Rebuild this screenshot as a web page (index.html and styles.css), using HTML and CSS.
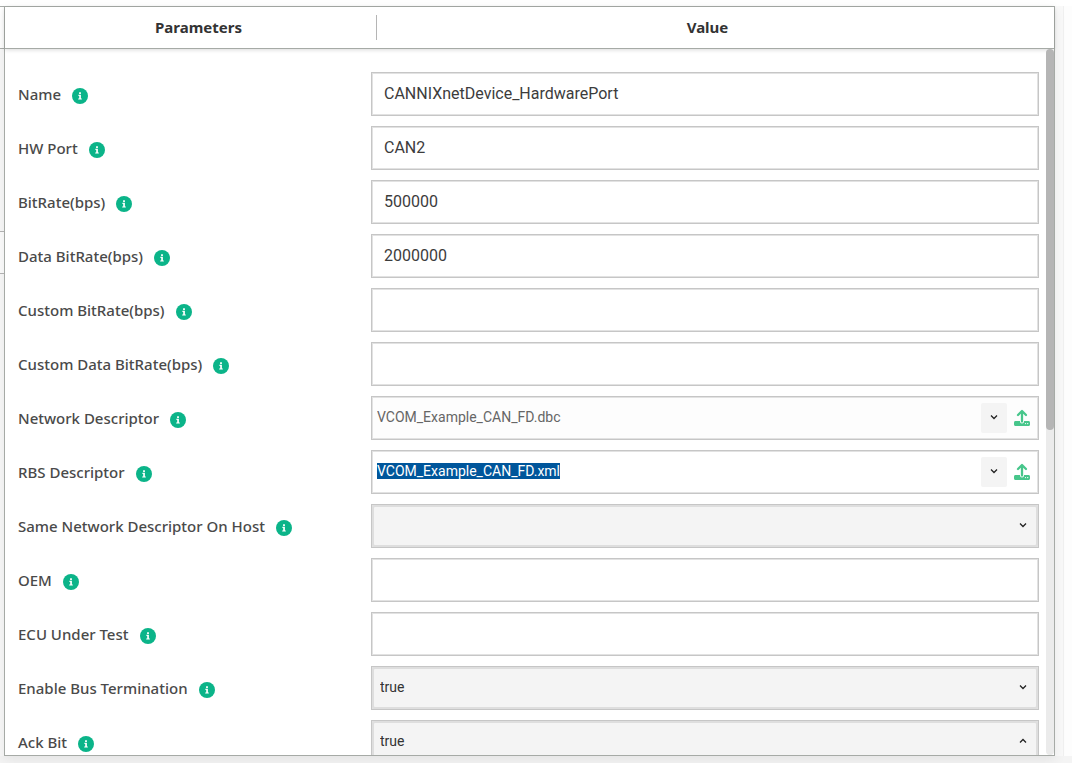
FILE: index.html
```html
<!DOCTYPE html>
<html lang="en">
<head>
<meta charset="utf-8">
<title>Device parameters</title>
<link rel="stylesheet" href="styles.css">
</head>
<body>
<svg class="defs" aria-hidden="true">
  <symbol id="info" viewBox="0 0 16 16"><circle cx="8" cy="8" r="8" fill="#0bb489"/><path fill="#fff" d="M7.100 4.300h1.800v1.600h-1.800zM6.400 6.800h2.500v3.700h.9v1.100H6.200v-1.100h1V7.900h-.8z"/></symbol>
  <symbol id="down" viewBox="0 0 8 8"><path d="M1 2.500l3 3 3-3" fill="none" stroke="#222" stroke-width="1.300"/></symbol>
  <symbol id="up" viewBox="0 0 8 8"><path d="M1 5.500l3-3 3 3" fill="none" stroke="#222" stroke-width="1.300"/></symbol>
  <symbol id="upload" viewBox="0 0 16 18"><path fill="#47c68b" d="M1.500 12h13c.9 0 1.500.6 1.500 1.500v2c0 .9-.6 1.500-1.500 1.500h-13C.6 17 0 16.400 0 15.500v-2C0 12.600.6 12 1.500 12z"/><path d="M8 12.500V3" fill="none" stroke="#fff" stroke-width="4" stroke-linecap="round"/><path d="M8 12.500V2.500M4 6L8 2l4 4" fill="none" stroke="#47c68b" stroke-width="2.300" stroke-linecap="round" stroke-linejoin="round"/><circle cx="11.500" cy="14.600" r=".6" fill="#fff"/><circle cx="13.700" cy="14.600" r=".7" fill="#fff"/></symbol>
</svg>
<div class="page">
  <div class="gutter"><div class="gutter-head"></div><div class="gutter-space"></div><div class="gutter-row"></div></div>
  <main class="panel">
    <header class="head">
      <div class="head-cell head-name">Parameters</div>
      <div class="head-cell head-value">Value</div>
    </header>
    <div class="body">
      <form class="rows">
        <div class="row"><label for="f1">Name <svg class="info"><use href="#info"/></svg></label><input class="field" id="f1" value="CANNIXnetDevice_HardwarePort"></div>
        <div class="row"><label for="f2">HW Port <svg class="info"><use href="#info"/></svg></label><input class="field" id="f2" value="CAN2"></div>
        <div class="row"><label for="f3">BitRate(bps) <svg class="info"><use href="#info"/></svg></label><input class="field" id="f3" value="500000"></div>
        <div class="row"><label for="f4">Data BitRate(bps) <svg class="info"><use href="#info"/></svg></label><input class="field" id="f4" value="2000000"></div>
        <div class="row"><label for="f5">Custom BitRate(bps) <svg class="info"><use href="#info"/></svg></label><input class="field" id="f5"></div>
        <div class="row"><label for="f6">Custom Data BitRate(bps) <svg class="info"><use href="#info"/></svg></label><input class="field" id="f6"></div>
        <div class="row"><label for="f7">Network Descriptor <svg class="info"><use href="#info"/></svg></label>
          <div class="combo muted"><input id="f7" value="VCOM_Example_CAN_FD.dbc"><button type="button" class="drop" aria-label="Show options"><svg class="chevron"><use href="#down"/></svg></button><button type="button" class="upload" aria-label="Upload"><svg><use href="#upload"/></svg></button></div></div>
        <div class="row"><label for="f8">RBS Descriptor <svg class="info"><use href="#info"/></svg></label>
          <div class="combo"><input id="f8" value="VCOM_Example_CAN_FD.xml"><button type="button" class="drop" aria-label="Show options"><svg class="chevron"><use href="#down"/></svg></button><button type="button" class="upload" aria-label="Upload"><svg><use href="#upload"/></svg></button></div></div>
        <div class="row"><label for="f9">Same Network Descriptor On Host <svg class="info"><use href="#info"/></svg></label>
          <div class="choice"><select id="f9"><option></option><option>true</option><option>false</option></select><svg class="chevron"><use href="#down"/></svg></div></div>
        <div class="row"><label for="f10">OEM <svg class="info"><use href="#info"/></svg></label><input class="field" id="f10"></div>
        <div class="row"><label for="f11">ECU Under Test <svg class="info"><use href="#info"/></svg></label><input class="field" id="f11"></div>
        <div class="row"><label for="f12">Enable Bus Termination <svg class="info"><use href="#info"/></svg></label>
          <div class="choice"><select id="f12"><option>true</option><option>false</option></select><svg class="chevron"><use href="#down"/></svg></div></div>
        <div class="row"><label for="f13">Ack Bit <svg class="info"><use href="#info"/></svg></label>
          <div class="choice"><select id="f13"><option>true</option><option>false</option></select><svg class="chevron"><use href="#up"/></svg></div></div>
      </form>
      <div class="track"><div class="thumb"></div></div>
    </div>
  </main>
  <div class="edge"></div>
</div>
<script src="main.js"></script>
</body>
</html>
```
FILE: styles.css
```css
* { box-sizing: border-box; }
body { margin: 0; background: #fff; font-family: "Noto Sans", "Open Sans", sans-serif; color: #4a4a4a; }
.defs { position: absolute; width: 0; height: 0; }
.page { display: flex; height: 100vh; padding: 6px 0 7px; background: linear-gradient(to top, #f4f4f4 7px, #fff 7px); overflow: hidden; }

.gutter { width: 4px; display: flex; flex-direction: column; background: #f8f8f8; }
.gutter-head { height: 43px; background: #fff; border-top: 1px solid #a9aca9; border-bottom: 1px solid #a9aca9; }
.gutter-space { height: 182px; }
.gutter-row { height: 43px; background: #fcfcfc; border-top: 1px solid #b5b5b5; border-bottom: 1px solid #b5b5b5; }

.panel { flex: 1; min-width: 0; display: flex; flex-direction: column; background: #fff; border: 1px solid #a6aaa6; box-shadow: 0 4px 12px rgba(0, 0, 0, .07); z-index: 1; }
.edge { width: 17px; background: linear-gradient(to right, #f9f9f9 8px, #f0f0f0 8px, #f0f0f0 9px, #fdfdfd 9px); }

.head { display: grid; grid-template-columns: 371fr 678fr; height: 42px; flex: none; align-items: center; border-bottom: 1px solid #a6aaa6; box-shadow: 0 1px 4px rgba(0, 0, 0, .15); font-size: 15px; font-weight: 700; color: #333; text-align: center; }
.head-cell { height: 25px; line-height: 25px; }
.head-name { padding-left: 16px; }
.head-value { padding-right: 16px; border-left: 1px solid #b5b5b5; }

.body { flex: 1; min-height: 0; display: flex; overflow: hidden; }
.rows { flex: 1; min-width: 0; display: flex; flex-direction: column; gap: 10px; padding: 23px 7px 0 13px; }
.row { display: grid; grid-template-columns: 353fr 668fr; align-items: center; height: 44px; flex: none; }
label { display: flex; align-items: center; gap: 11px; font-size: 15px; font-weight: 500; line-height: 20px; }
.info { width: 16px; height: 16px; margin-top: 3px; }

.field, .combo, .choice { width: 100%; height: 44px; border: 1px solid #c6c6c6; box-shadow: inset 0 0 0 1px #e2e2e2; background: #fff; font-family: Roboto, sans-serif; border-radius: 0; outline: none; color: #3c3c3c; }
.field { padding: 0 12px 2px; font-size: 16px; }
.combo { display: flex; align-items: center; padding: 0 8px 0 5px; }
.combo input { flex: 1; min-width: 0; height: 40px; padding: 0 0 2px; border: 0; outline: none; background: transparent; font: 14px Roboto, sans-serif; color: #333; }
.combo.muted { background: #fdfdfd; }
.combo.muted input { color: #666; }
.combo input::selection { background: #00569b; color: #fff; }
button { border: 0; padding: 0; display: flex; align-items: center; justify-content: center; }
.drop { width: 26px; height: 30px; background: #f4f4f4; padding-bottom: 2px; border-radius: 2px; }
.upload { width: 16px; height: 18px; margin-left: 7px; background: none; }
.upload svg { width: 16px; height: 18px; }
.chevron { width: 8px; height: 8px; }

.choice { display: grid; align-items: center; background: #f4f4f4; }
.choice > * { grid-area: 1 / 1; }
.choice select { width: 100%; height: 42px; appearance: none; padding: 0 28px 2px 6px; border: 2px solid #dedede; border-radius: 3px; background: #f4f4f4; font: 14px Roboto, sans-serif; color: #333; outline: none; }
.choice .chevron { justify-self: end; margin: 0 11px 2px 0; pointer-events: none; }

.track { width: 8px; background: #ebebeb; border-radius: 4px; }
.thumb { height: 54%; background: #b5b5b5; border-radius: 4px; }
```
FILE: main.js
```js
const active = document.getElementById("f8");
active.focus();
active.select();
```
